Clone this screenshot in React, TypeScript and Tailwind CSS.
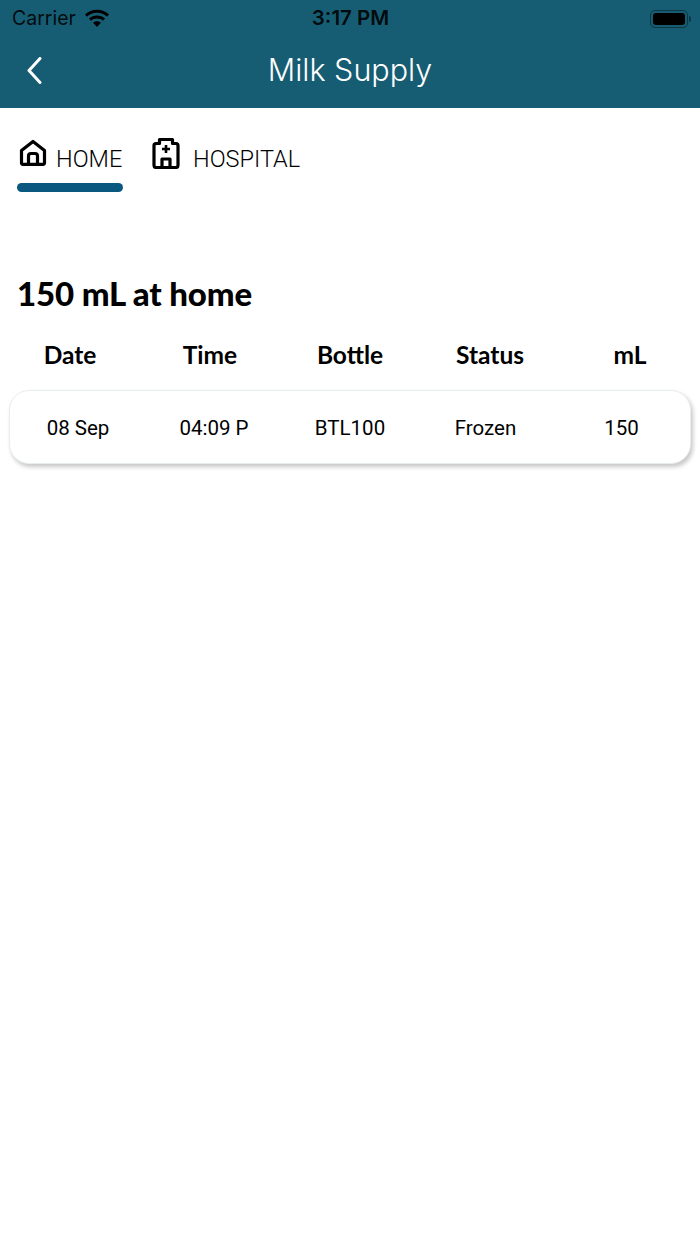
const columns = ['Date', 'Time', 'Bottle', 'Status', 'mL'];

function WifiIcon() {
  return (
    <svg width="28" height="20" viewBox="0 0 26 19" fill="black">
      <path d="M13 3.6c3.7 0 7 1.4 9.5 3.8l1.900-2.100C21.400 2.400 17.400.8 13 .8S4.600 2.400 1.600 5.300l1.900 2.100C6 5 9.300 3.600 13 3.600z" />
      <path d="M13 9c2.200 0 4.200.8 5.700 2.200l1.900-2.100C18.600 7.200 15.900 6.100 13 6.100S7.400 7.200 5.400 9.100l1.900 2.100C8.800 9.800 10.800 9 13 9z" />
      <path d="M13 11.600c-1.400 0-2.700.5-3.700 1.400L13 17.200l3.700-4.200c-1-.9-2.300-1.400-3.700-1.400z" />
    </svg>
  );
}

function HomeIcon() {
  return (
    <svg width="28" height="28" viewBox="0 0 28 28" fill="none" stroke="black" strokeWidth="3.2" strokeLinejoin="round" strokeLinecap="round">
      <path d="M2.500 11.500 14 2.500l11.500 9v12.300a1.500 1.500 0 0 1-1.500 1.500H4a1.500 1.500 0 0 1-1.500-1.500z" />
      <path d="M9.500 25v-8a2.500 2.500 0 0 1 2.500-2.500h4a2.500 2.500 0 0 1 2.500 2.500v8" />
    </svg>
  );
}

function HospitalIcon() {
  return (
    <svg width="28" height="32" viewBox="0 0 28 32" fill="none" stroke="black" strokeWidth="3.2" strokeLinejoin="round">
      <path d="M7.500 6.500V2.500h13v4h3.500a2 2 0 0 1 2 2v20a2 2 0 0 1-2 2H4a2 2 0 0 1-2-2v-20a2 2 0 0 1 2-2z" />
      <path d="M10 30v-8h8v8" />
      <path d="M14 8v8M10 12h8" strokeWidth="2.600" />
    </svg>
  );
}

export default function App() {
  return (
    <div className="min-h-[1244px] w-[700px] bg-white font-['Roboto',sans-serif] text-black">
      <header className="h-[108px] bg-[#165d73]">
        <div className="flex h-[37px] items-center justify-between pl-3 pr-[9px]">
          <div className="flex w-[198px] items-center gap-[7px]">
            <span className="font-['Inter',sans-serif] text-[19.500px] text-black/90">Carrier</span>
            <WifiIcon />
          </div>
          <span className="font-['Inter',sans-serif] text-[20.500px] font-semibold text-black/90">3:17 PM</span>
          <div className="flex w-[200px] items-center justify-end">
            <div className="h-[18px] w-[38px] rounded-[5px] border border-black/40 p-[2px]">
              <div className="h-full w-full rounded-[3px] bg-black" />
            </div>
            <div className="ml-[1px] h-[6px] w-[2px] rounded-r-sm bg-black/40" />
          </div>
        </div>
        <div className="flex h-[67px] items-center">
          <div className="flex w-[68px] justify-center">
            <svg width="15" height="27" viewBox="0 0 15 27" fill="none" stroke="white" strokeWidth="3" strokeLinecap="round" strokeLinejoin="round">
              <path d="M13 1.500 2 13.500 13 25.500" />
            </svg>
          </div>
          <h1 className="flex-1 pr-[68px] text-center font-['Inter',sans-serif] text-[30.500px] font-light leading-none text-white">Milk Supply</h1>
        </div>
      </header>

      <nav className="flex pl-[17px] pt-[29px]">
        <div className="flex w-[106px] flex-col">
          <div className="flex h-[46px] items-start">
            <div className="ml-[2px] mr-[9px] mt-[2px]"><HomeIcon /></div>
            <span className="mt-[6px] text-[23.500px] font-light leading-[32px]">HOME</span>
          </div>
          <div className="h-[9px] rounded-full bg-[#0a5880]" />
        </div>
        <div className="ml-[29px] flex h-[46px] items-start">
          <div className="mr-[13px]"><HospitalIcon /></div>
          <span className="mt-[6px] text-[23.500px] font-light leading-[32px]">HOSPITAL</span>
        </div>
      </nav>

      <h2 className="mt-[80px] pl-[17px] font-['Lato',sans-serif] text-[33px] font-black leading-[42px] tracking-[-0.15px]">150 mL at home</h2>

      <div className="mt-[21px] grid h-[40px] grid-cols-5 items-center">
        {columns.map((c) => (
          <span key={c} className="text-center font-['Lato',sans-serif] text-[24.500px] font-bold leading-none">{c}</span>
        ))}
      </div>

      <div className="mx-[9px] mt-[15px] flex h-[74px] items-center rounded-[20px] border border-[#e8edf0] bg-white pt-[2px] text-[20.500px] shadow-[2px_3px_4px_rgba(0,0,0,0.22)]">
        <span className="w-[136px] text-center">08 Sep</span>
        <span className="w-[136px] text-center">04:09 P</span>
        <span className="w-[136px] text-center">BTL100</span>
        <span className="w-[135px] text-center">Frozen</span>
        <span className="w-[137px] text-center">150</span>
      </div>
    </div>
  );
}
